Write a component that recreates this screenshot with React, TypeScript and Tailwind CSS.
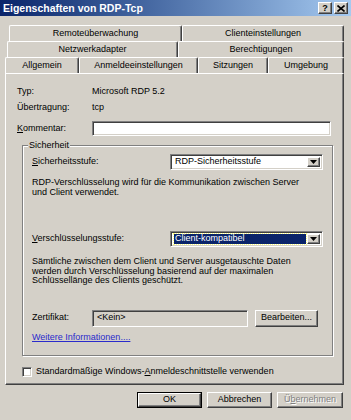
import React from "react";

const raised =
  "border border-t-white border-l-white border-r-[#404040] border-b-[#404040] shadow-[inset_-1px_-1px_0_#808080]";
const sunken =
  "border border-t-[#808080] border-l-[#808080] border-r-white border-b-white shadow-[inset_1px_1px_0_#404040,inset_-1px_-1px_0_#d4d0c8]";

function U({ children }: { children: React.ReactNode }) {
  return <span className="underline underline-offset-[1px]">{children}</span>;
}

function Arrow() {
  return (
    <svg width="7" height="4" viewBox="0 0 7 4">
      <path d="M0 0h7L3.5 4z" fill="#000" />
    </svg>
  );
}

function Select({ text, highlighted }: { text: string; highlighted?: boolean }) {
  return (
    <div className={`w-[153px] h-[16px] bg-white flex items-stretch p-[2px] ${sunken}`}>
      <div className="flex-1 flex items-center pl-[1px] pr-[1px]">
        {highlighted ? (
          <div className="w-full h-full bg-[#0a246a] text-white flex items-center pl-[1px] outline outline-1 outline-dotted outline-[#ffff80]">
            {text}
          </div>
        ) : (
          <span className="pl-[1px]">{text}</span>
        )}
      </div>
      <div className={`w-[13px] bg-[#d4d0c8] flex items-center justify-center ${raised}`}>
        <Arrow />
      </div>
    </div>
  );
}

function Tab({ label, cls, selected }: { label: string; cls: string; selected?: boolean }) {
  return (
    <div
      className={`${cls} h-full flex items-center justify-center border-t border-l border-r border-t-white border-l-white border-r-[#404040] rounded-t-[2px] shadow-[inset_-1px_0_0_#808080] bg-[#d4d0c8] ${
        selected ? "relative z-10 -mb-[1px] h-[17px]" : ""
      }`}
    >
      {label}
    </div>
  );
}

export default function App() {
  return (
    <div
      className="w-[351px] h-[420px] bg-[#d4d0c8] overflow-hidden text-[9px] text-black"
      style={{ fontFamily: '"Liberation Sans", Arial, sans-serif' }}
    >
      {/* Title bar */}
      <div className="h-[16px] bg-gradient-to-r from-[#0a246a] to-[#a6caf0] flex items-center pl-[3px] pr-[3px]">
        <span className="text-white font-bold text-[10.5px] leading-none flex-1">Eigenschaften von RDP-Tcp</span>
        <div className="flex gap-[2px]">
          <div className={`w-[14px] h-[12px] bg-[#d4d0c8] flex items-center justify-center font-bold text-[9px] leading-none ${raised}`}>?</div>
          <div className={`w-[14px] h-[12px] bg-[#d4d0c8] flex items-center justify-center font-bold text-[10px] leading-none ${raised}`}>
            <svg width="8" height="7" viewBox="0 0 8 7">
              <path d="M0.5 0.5L7.5 6.5M7.5 0.5L0.5 6.5" stroke="#000" strokeWidth="1.6" />
            </svg>
          </div>
        </div>
      </div>

      {/* Tabs */}
      <div className="mt-[9px]">
        <div className="flex h-[16px] pl-[9px]">
          <Tab cls="w-[173px]" label="Remoteüberwachung" />
          <Tab cls="w-[162px]" label="Clienteinstellungen" />
        </div>
        <div className="flex h-[16px] pl-[7px]">
          <Tab cls="w-[171px]" label="Netzwerkadapter" />
          <Tab cls="w-[166px]" label="Berechtigungen" />
        </div>
        <div className="flex h-[16px] pl-[5px] items-start">
          <Tab cls="w-[74px]" label="Allgemein" selected />
          <Tab cls="w-[119px]" label="Anmeldeeinstellungen" />
          <Tab cls="w-[70px]" label="Sitzungen" />
          <Tab cls="w-[76px]" label="Umgebung" />
        </div>
      </div>

      {/* Panel */}
      <div className={`ml-[5px] w-[339px] h-[312px] ${raised} flex flex-col`}>
        <div className="mt-[12px] h-[12px] flex items-center pl-[11px]">
          <span className="w-[75px]">Typ:</span>
          <span>Microsoft RDP 5.2</span>
        </div>
        <div className="mt-[4px] h-[12px] flex items-center pl-[11px]">
          <span className="w-[75px]">Übertragung:</span>
          <span>tcp</span>
        </div>
        <div className="mt-[7px] h-[15px] flex items-center pl-[11px]">
          <span className="w-[75px]">
            <U>K</U>ommentar:
          </span>
          <div className={`w-[239px] h-[15px] bg-white ${sunken}`} />
        </div>

        {/* Group box */}
        <div className="mt-[9px] ml-[16px] w-[311px] h-[211px] relative border border-[#808080] shadow-[inset_1px_1px_0_#fff,1px_1px_0_#fff] flex flex-col">
          <span className="absolute left-[5px] -top-[6px] bg-[#d4d0c8] px-[1px] leading-[10px]">Sicherheit</span>
          <div className="mt-[8px] h-[16px] flex items-center pl-[9px]">
            <span className="w-[138px]">
              <U>S</U>icherheitsstufe:
            </span>
            <Select text="RDP-Sicherheitsstufe" />
          </div>
          <div className="mt-[8px] pl-[9px] leading-[9.5px]">
            RDP-Verschlüsselung wird für die Kommunikation zwischen Server
            <br />
            und Client verwendet.
          </div>
          <div className="mt-[34px] h-[16px] flex items-center pl-[9px]">
            <span className="w-[138px]">
              <U>V</U>erschlüsselungsstufe:
            </span>
            <Select text="Client-kompatibel" highlighted />
          </div>
          <div className="mt-[10px] pl-[9px] leading-[9.5px]">
            Sämtliche zwischen dem Client und Server ausgetauschte Daten
            <br />
            werden durch Verschlüsselung basierend auf der maximalen
            <br />
            Schlüssellänge des Clients geschützt.
          </div>
          <div className="mt-[24px] h-[17px] flex items-center pl-[9px]">
            <span className="w-[60px]">Zertifikat:</span>
            <div className={`w-[156px] h-[17px] bg-[#d4d0c8] flex items-center pl-[4px] ${sunken}`}>&lt;Kein&gt;</div>
            <div className={`ml-[7px] w-[63px] h-[17px] flex items-center justify-center ${raised}`}>Bearbeiten...</div>
          </div>
          <div className="mt-[6px] h-[10px] pl-[9px] flex items-center">
            <span className="text-[#2a2acc] underline underline-offset-[1px]">Weitere Informationen....</span>
          </div>
        </div>

        <div className="mt-[11px] ml-[16px] h-[10px] flex items-center">
          <div className={`w-[10px] h-[10px] bg-white ${sunken}`} />
          <span className="ml-[4px]">
            Standardmäßige Windows-<U>A</U>nmeldeschnittstelle verwenden
          </span>
        </div>
      </div>

      {/* Buttons */}
      <div className="mt-[7px] flex justify-end gap-[5px] pr-[8px]">
        <div className="w-[65px] h-[16px] border border-black">
          <div className={`w-full h-full flex items-center justify-center ${raised}`}>OK</div>
        </div>
        <div className={`w-[65px] h-[16px] flex items-center justify-center ${raised}`}>Abbrechen</div>
        <div className={`w-[66px] h-[16px] flex items-center justify-center text-[#808080] [text-shadow:1px_1px_0_#fff] ${raised}`}>
          Ü<U>b</U>ernehmen
        </div>
      </div>
    </div>
  );
}
